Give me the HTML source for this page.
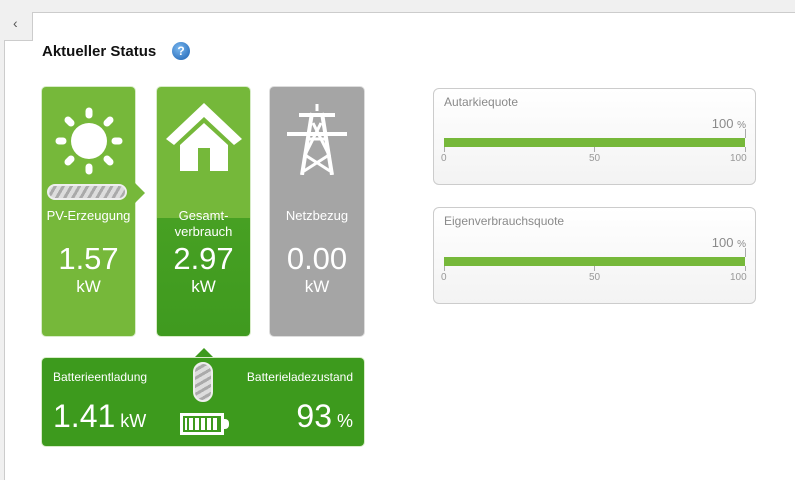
<!DOCTYPE html>
<html><head><meta charset="utf-8"><style>
*{margin:0;padding:0;box-sizing:border-box}
body{width:795px;height:474px;background:#f0f0f0;font-family:"Liberation Sans",Tahoma,sans-serif;position:relative;overflow:hidden}
.a{position:absolute}
.panel{left:4px;top:40px;width:800px;height:440px;background:#fff;border-left:1px solid #ccc}
.ptop{left:4px;top:40px;width:29px;height:1px;background:#ccc}
.tab{left:32px;top:12px;width:770px;height:29px;background:#fff;border-left:1px solid #ccc;border-top:1px solid #ccc}
.card{border-radius:4px;color:#fff;text-align:center;box-shadow:0 0 0 1px #d8ecc8}
.lbl{font-size:13px}
.big{font-size:31px;line-height:30px}
.unit{font-size:17px}
.box{border:1px solid #ccc;border-radius:6px;background:linear-gradient(#fff,#f3f3f3)}
.box .t{position:absolute;left:10px;top:6px;font-size:12px;color:#8a8a8a}
.box .p{position:absolute;right:9px;top:27px;font-size:13px;color:#8a8a8a}
.bar{position:absolute;left:10px;top:49px;width:301px;height:9px;background:#76b83a}
.tick{position:absolute;top:58px;width:1px;height:5px;background:#aaa}
.n{position:absolute;top:64px;font-size:10px;color:#999}
</style></head><body>
<div class="a panel"></div>
<div class="a tab"></div>
<div class="a ptop"></div>
<div class="a" style="left:13px;top:15px;font-size:14px;color:#555">&lsaquo;</div>
<div class="a" style="left:42px;top:43px;font-size:15px;font-weight:bold;color:#111">Aktueller Status</div>
<div class="a" style="left:172px;top:42px;width:18px;height:18px;border-radius:50%;background:radial-gradient(circle at 40% 35%,#7ab8f0,#1a5fb0);color:#fff;font-size:12px;font-weight:bold;text-align:center;line-height:18px">?</div>

<!-- PV -->
<div class="a card" style="left:42px;top:87px;width:93px;height:249px;background:#76b83a">
<svg class="a" style="left:13px;top:20px" width="68" height="68" viewBox="0 0 68 68" fill="#fff"><circle cx="34" cy="34" r="18"/><g stroke="#fff" stroke-width="7" stroke-linecap="round"><line x1="34" y1="4" x2="34" y2="8"/><line x1="34" y1="60" x2="34" y2="64"/><line x1="4" y1="34" x2="8" y2="34"/><line x1="60" y1="34" x2="64" y2="34"/><line x1="13" y1="13" x2="16" y2="16"/><line x1="52" y1="52" x2="55" y2="55"/><line x1="13" y1="55" x2="16" y2="52"/><line x1="52" y1="16" x2="55" y2="13"/></g></svg>
<div class="a" style="left:5px;top:97px;width:80px;height:16px;border-radius:8px;background:repeating-linear-gradient(120deg,#ddd 0 4px,#aaa 4px 7px);border:2px solid #eee"></div>
<div class="a lbl" style="left:0;top:121px;width:93px">PV-Erzeugung</div>
<div class="a big" style="left:0;top:157px;width:93px">1.57</div>
<div class="a unit" style="left:0;top:190px;width:93px">kW</div>
</div>
<div class="a" style="left:135px;top:183px;width:0;height:0;border-top:10px solid transparent;border-bottom:10px solid transparent;border-left:10px solid #76b83a"></div>

<!-- Gesamt -->
<div class="a card" style="left:157px;top:87px;width:93px;height:249px;background:linear-gradient(#75b83a 0,#75b83a 131px,#47a023 131px,#3f9a1f 100%)">
<svg class="a" style="left:7px;top:14px" width="80" height="72" viewBox="0 0 80 72" fill="#fff"><path d="M40 2 L78 38 L70 44 L40 16 L10 44 L2 38Z"/><path d="M16 44 L40 22 L64 44 V70 H46 V47 H34 V70 H16Z"/></svg>
<div class="a lbl" style="left:0;top:121px;width:93px;line-height:16px">Gesamt-<br>verbrauch</div>
<div class="a big" style="left:0;top:157px;width:93px">2.97</div>
<div class="a unit" style="left:0;top:190px;width:93px">kW</div>
</div>

<!-- Netz -->
<div class="a card" style="left:270px;top:87px;width:94px;height:249px;background:#a5a5a5;box-shadow:0 0 0 1px #ddd">
<svg class="a" style="left:14px;top:16px" width="66" height="72" viewBox="0 0 66 72" fill="#fff" stroke="#fff" stroke-width="3"><line x1="33" y1="1" x2="33" y2="8"/><path d="M15 10 H51 V14 H15Z M3 29 H63 V33 H3Z" stroke="none"/><path d="M28 10 L18 72 M38 10 L48 72" fill="none" stroke-width="4"/><path d="M29 20 L45 52 L20 68 M37 20 L21 52 L46 68 M25 36 H41" fill="none"/></svg>
<div class="a lbl" style="left:0;top:121px;width:94px">Netzbezug</div>
<div class="a big" style="left:0;top:157px;width:94px">0.00</div>
<div class="a unit" style="left:0;top:190px;width:94px">kW</div>
</div>

<!-- Battery -->
<div class="a" style="left:193px;top:348px;width:0;height:0;border-left:11px solid transparent;border-right:11px solid transparent;border-bottom:11px solid #3d9a1d"></div>
<div class="a card" style="left:42px;top:358px;width:322px;height:88px;background:#3d9a1d;text-align:left">
<div class="a lbl" style="left:11px;top:12px;font-size:12px">Batterieentladung</div>
<div class="a lbl" style="right:11px;top:12px;font-size:12px">Batterieladezustand</div>
<div class="a" style="left:11px;top:40px;font-size:32px">1.41<span style="font-size:18px"> kW</span></div>
<div class="a" style="right:11px;top:40px;font-size:32px">93<span style="font-size:18px"> %</span></div>
<div class="a" style="left:151px;top:4px;width:20px;height:40px;border-radius:10px;background:repeating-linear-gradient(150deg,#ddd 0 4px,#aaa 4px 7px);border:2px solid #eee"></div>
<div class="a" style="left:138px;top:55px;width:44px;height:22px;border:3px solid #fff;background:repeating-linear-gradient(90deg,#fff 0 4px,transparent 4px 6px);background-clip:content-box;padding:2px"></div>
<div class="a" style="left:182px;top:61px;width:5px;height:10px;background:#fff;border-radius:0 4px 4px 0"></div>
</div>

<!-- Right boxes -->
<div class="a box" style="left:433px;top:88px;width:323px;height:97px">
<div class="t">Autarkiequote</div><div class="p">100 <span style="font-size:10px">%</span></div>
<div class="tick" style="left:311px;top:40px;height:9px"></div>
<div class="bar"></div>
<div class="tick" style="left:10px"></div><div class="tick" style="left:160px"></div><div class="tick" style="left:311px"></div>
<div class="n" style="left:7px">0</div><div class="n" style="left:155px">50</div><div class="n" style="left:296px">100</div>
</div>
<div class="a box" style="left:433px;top:207px;width:323px;height:97px">
<div class="t">Eigenverbrauchsquote</div><div class="p">100 <span style="font-size:10px">%</span></div>
<div class="tick" style="left:311px;top:40px;height:9px"></div>
<div class="bar"></div>
<div class="tick" style="left:10px"></div><div class="tick" style="left:160px"></div><div class="tick" style="left:311px"></div>
<div class="n" style="left:7px">0</div><div class="n" style="left:155px">50</div><div class="n" style="left:296px">100</div>
</div>
</body></html>
